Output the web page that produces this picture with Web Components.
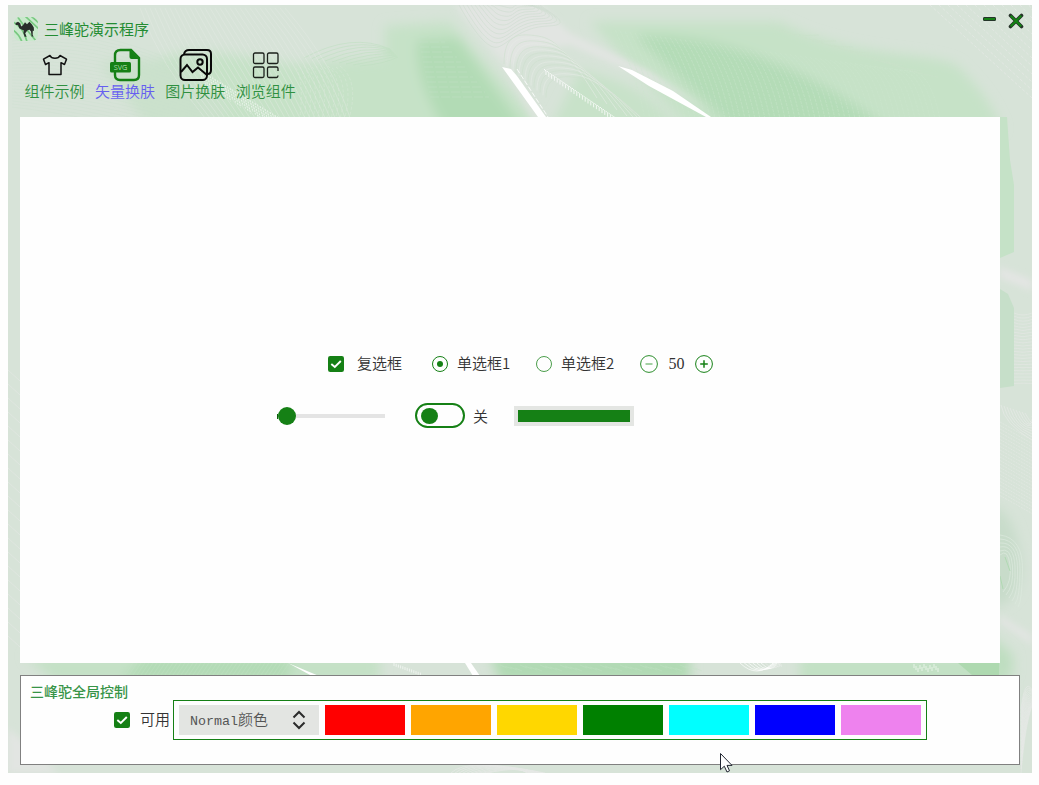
<!DOCTYPE html>
<html lang="zh-CN">
<head>
<meta charset="utf-8">
<title>三峰驼演示程序</title>
<style>
html,body{margin:0;background:#fefefe;overflow:hidden}
body{height:785px;font:15px/18px "Noto Sans CJK SC",sans-serif;--green:#158015}
</style>
</head>
<body>
<demo-window></demo-window>
<script>
function define(name, html, setup) {
  customElements.define(name, class extends HTMLElement {
    connectedCallback() {
      if (this.shadowRoot) return;
      const root = this.attachShadow({ mode: 'open' });
      root.innerHTML = html;
      if (setup) setup.call(this, root);
    }
  });
}

/* Satin backdrop: soft folds, fine contour lines and bright highlights */
define('satin-backdrop', `
<style>:host{display:block;overflow:hidden}svg{display:block}</style>
<svg width="1024" height="768" viewBox="8 5 1024 768">
<defs>
<filter id="b" x="-30%" y="-30%" width="160%" height="160%"><feGaussianBlur stdDeviation="6"/></filter>
<filter id="s" x="-30%" y="-30%" width="160%" height="160%"><feGaussianBlur stdDeviation="3"/></filter>
</defs>
<rect x="8" y="5" width="1024" height="768" fill="#d7e3d8"/>
<g filter="url(#b)">
<path d="M150 62C200 40 260 62 300 64L385 58V26L450 22L545 130H200Z" fill="#c6e2c7"/>
<path d="M100 64C140 50 190 60 230 110L210 130H150Z" fill="#cbe1cc"/>
<path d="M418 40L458 38L525 130H445C428 100 414 70 418 40Z" fill="#b2dbb5"/>
<path d="M590 22H780C850 60 940 50 960 68C980 90 990 100 1002 130H690Z" fill="#c6e2c7"/>
<path d="M635 36C700 30 800 60 890 130H735Z" fill="#b4dcb7"/>
<path d="M580 70C620 80 650 90 680 130H550Z" fill="#c8e2c9"/>
<path d="M25 655H380V682H55Z" fill="#c4e1c6"/>
<path d="M145 655H290V682H120Z" fill="#b3dbb6"/>
<path d="M490 655H690V682H500Z" fill="#b1dab4"/>
<path d="M800 655H1010V690H800Z" fill="#c3e1c5"/>
<path d="M985 505C1008 505 1018 530 1022 570C1018 600 1005 606 985 608Z" fill="#c8dcca"/>
<path d="M985 630L1013 655V675H985Z" fill="#bedec0"/>
</g>
<path d="M998 117H1007L1010 160L1014 185V252L1000 258Z" fill="#c5e2c7"/>
<path d="M1000 289L1008 294L1014 308V386L1000 388Z" fill="#c6dfc9"/>
<path d="M958 663H999V675H972Z" fill="#aed9b0"/>
<g filter="url(#s)">
<path d="M455 5H540L570 33L650 72L710 112L640 75L570 45L525 50L508 70Z" fill="#e2e5e2"/>
<path d="M490 40L550 125H536Z" fill="#dce4dc"/>
<path d="M1000 267L1032 280V291L1000 278Z" fill="#e3e5e3"/>
<path d="M1000 615L1032 635V645L1000 623Z" fill="#e2e5e2"/>
<path d="M8 728L58 773H8Z" fill="#e2e5e2"/>
</g>
<g id="lines" fill="none" stroke-width=".8"></g>
<path d="M502 67L511 69L517 76L546 117H538Z" fill="#fff"/>
<path d="M517 69L548 117" stroke="#fff" stroke-width=".8" stroke-dasharray="5 2"/>
<path d="M618 66L632 70L673 91L711 117H706L649 86Z" fill="#fff"/>
<path d="M288 663L319 676H312Z" fill="#fff"/>
<path d="M465 663H471L480 676H473Z" fill="#fff"/>
</svg>`, function (root) {
  const g = root.getElementById('lines');
  let out = '';
  const add = (d, c, o = 1, dash = '') => out += `<path d="${d}" stroke="${c}" opacity="${o}"${dash ? ` stroke-dasharray="${dash}"` : ''}/>`;
  // nested hanging folds at the top edge
  for (let i = 0; i < 10; i++) add(`M${459 + i * 4} 5C${474 + i * 3} ${32 - i * 3} ${488 + i} ${50 - i * 5} ${498 + i} ${47 - i * 4.4}S${520 - i} ${27 - i * 2.6} ${548 - i * 3} ${26 - i * 2.4}S${548 - i * 2} ${12 - i} ${540 - i * 2} 5`, '#cedccf', .8);
  // arches above the highlight
  for (let i = 0; i < 15; i++) add(`M${504 + i * 3} ${64 + i * 2.4}C${504 + i * 3} ${34 + i * 3} ${518 + i * 3} ${33 + i * 3} ${538 + i * 3} ${36 + i * 3}S${568 + i * 5} ${56 + i * 4} ${592 + i * 5} ${95 + i * 3}`, i % 2 ? '#e6ebe6' : '#ccdfcd', .75);
  for (let i = 0; i < 26; i++) add(`M${544 + i * 2.8} ${69 + i * 1.9}q3 1 2 6`, '#fff', .95);
  for (let i = 0; i < 32; i++) add(`M${200 + i * 2.5} ${70 + i * 1.5}l3 ${12 + (i % 4)}`, '#fff', .8, '2 1');
  for (let i = 0; i < 9; i++) add(`M${304 + i * 7} ${58 + i}Q${352 + i * 4} ${32 + i * 4} ${390 + i} ${49 + i}`, '#bfdec1', .7);
  for (let i = 0; i < 13; i++) add(`M${418 + i} ${37 + i * 5}h${23 + i * 3}`, '#c5dfc6', .6, '9 2');
  for (let i = 0; i < 12; i++) add(`M${296 + i * 4} ${68 - i % 3}Q${304 + i * 5} 80 ${300 + i * 4.5} 117`, '#d8e7d8', .7, '3 2');
  for (let i = 0; i < 60; i++) add(`M${615 + i * 5} ${30 + i * .7}Q${635 + i * 5} 70 ${645 + i * 5} 119`, '#cde5ce', .55, '3 1');
  for (let i = 0; i < 8; i++) add(`M${765 + i * 17} ${25 + i * 5}q26 13 54 ${10 + i}`, '#c9e1ca', .8);
  for (let i = 0; i < 30; i++) add(`M${140 + i * 5} 8Q${160 + i * 6} 65 ${205 + i * 5} 118`, '#e5eae5', .5);
  for (let i = 0; i < 25; i++) add(`M12 ${35 + i * 3}Q90 ${20 + i * 4} 200 ${72 + i * 3}`, '#c9dfcb', .35);
  for (let i = 0; i < 12; i++) add(`M${930 + i * 9} 5L1032 ${98 - i * 8}`, '#e6e9e6', .9, '3 2');
  for (let i = 0; i < 9; i++) add(`M${1001 + i * 3} ${405 + i}Q${1004 + i * 4} ${424 + i} 1032 ${440 - i * 3}`, '#e6e9e6', .9);
  for (let i = 0; i < 22; i++) add(`M1000 ${422 + i * 3.5}L1032 ${440 + i * 3.5}`, '#e6e9e6', .7, '2 1');
  for (let i = 0; i < 23; i++) add(`M1014 ${313 + i * 3.2}Q1023 ${317 + i * 3} 1032 ${313 + i * 3.2}`, '#e4e8e4', .8);
  for (let i = 0; i < 6; i++) add(`M1000 ${555 - i * 4}Q${1008 + i * 3} ${548 - i * 2} ${1010 + i * 2.5} ${565 + i}T${1003 + i * 3} ${592 + i * 3}`, '#dce9dd', .9);
  add('M1005 557L1010 571M1000 576L1003 589', '#a9d8ac', 1);
  for (let i = 0; i < 20; i++) add(`M8 ${370 + i * 14}L20 ${381 + i * 14}`, '#e5e8e5', .8);
  for (let i = 0; i < 17; i++) add(`M1021 ${773 - i * 4}Q1025 ${725 - i * 3} 1032 ${706 - i}`, '#e8eae8', .7);
  for (let i = 0; i < 10; i++) add(`M${740 + i * 4.2} 663Q${757 + i * 3} ${679 - i} ${773 + i * .8} 663`, i < 6 ? '#fff' : '#e8ece8', .85);
  for (let i = 0; i < 10; i++) add(`M${451 + i * 4} 773Q${466 + i * 6} ${757 + i} ${545 - i * 2} 773`, '#e6e9e6', 1);
  for (let i = 0; i < 13; i++) add(`M${394 + i * 2.2} ${663 + i * .8}v3M${914 + i * 2} ${664 + i * 2 % 5}v4`, '#fff', .75);
  for (let i = 0; i < 40; i++) add(`M${125 + i * 4} 675l8 -12M${500 + i * 5} ${665 + i % 4}l7 3`, '#c4e2c6', .45);
  g.innerHTML = out;
});

define('camel-logo', `
<style>:host{display:block;width:24px;height:24px}svg{display:block}</style>
<svg width="24" height="24" viewBox="0 0 24 24"><defs><clipPath id="r"><rect width="24" height="24" rx="6"/></clipPath></defs>
<g clip-path="url(#r)"><rect width="24" height="24" fill="#c9e9cc"/><path d="M-1 5Q10 11 13 25M3-1Q13 14 23 25M11-1L25 12M-1 13Q5 17 8 25M17-1L25 6" stroke="#79c981" stroke-width="1.7" fill="none"/></g>
<path d="M1.5 6L4 4.8L6.2 6.2L7.2 9.5L9.2 8L11 5.2L13 7.3L15.4 4.8L18 7.5L19.8 10.5L20 14L18.8 13.5L18.7 18L19.6 19.6H17.6L17 14.6L15.5 12.8L13.6 13.2L11.2 16.2L12.6 19.8H10.6L9.4 16L9.8 13.4L7.5 12.6L5.2 11.2L4 8L1.8 8Z" fill="#292e2b"/></svg>`);

define('app-icon', `
<style>:host{display:block;width:36px;height:34px}svg{display:block}</style><div></div>`, function (root) {
  const art = {
    shirt: '<path d="M13 7.5L6.5 11.2L8.5 16.5L12 14.7V26.5H24V14.7L27.5 16.5L29.5 11.2L23 7.5C21.5 11.2 14.5 11.2 13 7.5Z" fill="none" stroke="#111" stroke-width="1.5" stroke-linejoin="round"/>',
    svg: '<path d="M8 15V7.5Q8 2 13.5 2H24L32 10V27Q32 32 27 32H13Q8 32 8 27V24" fill="none" stroke="#158015" stroke-width="2.4"/><path d="M22.5 1.5L32 11H24.5Q22.5 11 22.5 9Z" fill="#158015"/><rect x="3" y="14" width="21" height="10.5" rx="1.5" fill="#158015"/><text x="13.5" y="22" text-anchor="middle" textLength="13.5" lengthAdjust="spacingAndGlyphs" font-family="Noto Sans,sans-serif" font-size="8" fill="#d6ecd5">SVG</text>',
    picture: '<g fill="none" stroke="#080808" stroke-width="2"><path d="M6 6Q7 2 11 2H29Q33 2 33 6V22Q33 26 29.5 26"/><rect x="2.5" y="6.5" width="26.5" height="25.5" rx="4.5"/><path d="M3 24L9 17L14.5 24L20 19.5L29 27"/><circle cx="22" cy="14" r="2.7"/></g>',
    grid: '<g fill="none" stroke="#1b211b" stroke-width="1.3"><rect x="5.5" y="5" width="10.5" height="10.5" rx="1.5"/><rect x="19.5" y="5" width="10.5" height="10.5" rx="1.5"/><rect x="5.5" y="19" width="10.5" height="10.5" rx="1.5"/><path d="M30 23V20.5Q30 19 28.5 19H21Q19.5 19 19.5 20.5V28Q19.5 29.5 21 29.5H28.5Q30 29.5 30 27.5"/></g>'
  };
  root.querySelector('div').innerHTML = `<svg width="36" height="34" viewBox="0 0 36 34">${art[this.getAttribute('name')]}</svg>`;
});

define('tool-button', `
<style>:host{display:flex;flex-direction:column;align-items:center;width:60px;color:#2f9040;font-weight:350}
:host([active]){color:#665ff0}span{white-space:nowrap;line-height:18px;margin-left:-1px}</style>
<slot name="icon"></slot><span><slot></slot></span>`);

define('check-mark', `
<style>:host{display:flex;align-items:center;color:#333;font-weight:350;white-space:nowrap}svg{flex:none;margin-right:var(--gap,13px)}span{margin-top:-2px}</style>
<svg width="16" height="16" viewBox="0 0 16 16"><rect width="16" height="16" rx="2.2" fill="#158015"/><path d="M3.3 8L6.8 11L12.8 5" fill="none" stroke="#fff" stroke-width="1.9"/></svg><span><slot></slot></span>`);

define('radio-option', `
<style>:host{display:flex;align-items:center;color:#333;font-weight:350;white-space:nowrap}
i{box-sizing:border-box;flex:none;width:16px;height:16px;border:1px solid #4c9e4c;border-radius:50%;margin-right:9px;display:grid;place-items:center}span{margin-top:-2px}
:host([checked]) i{border-color:var(--green)}:host([checked]) i::after{content:"";width:6px;height:6px;border-radius:50%;background:var(--green)}
</style><i></i><span><slot></slot></span>`);

define('number-stepper', `
<style>:host{display:flex;align-items:center;width:73px;justify-content:space-between;color:#333}span{font:16px/18px "Liberation Serif",serif}svg{display:block}</style>
<svg width="18" height="18" viewBox="0 0 18 18" fill="none" stroke="#2c8e2c"><circle cx="9" cy="9" r="8.4"/><path d="M5.5 9H12.5" stroke="#71b671" stroke-width="1.3"/></svg><span><slot></slot></span>
<svg width="18" height="18" viewBox="0 0 18 18" fill="none" stroke="#158015"><circle cx="9" cy="9" r="8.4"/><path d="M5.2 9H12.8M9 5.2V12.8" stroke-width="1.5"/></svg>`);

define('value-slider', `
<style>:host{display:flex;align-items:center;width:108px;height:18px}b{width:1px;height:5px;background:#0a600a}i{width:18px;height:18px;border-radius:50%;background:var(--green)}u{flex:1;height:4px;background:#e4e4e4}</style><b></b><i></i><u></u>`);

define('toggle-switch', `
<style>:host{display:flex;align-items:center;color:#333;font-weight:350}i{box-sizing:border-box;flex:none;width:50px;height:25px;border:2px solid var(--green);border-radius:13px;display:flex;align-items:center;padding-left:4px;margin:-1px 8px 0 0}i::after{content:"";width:17px;height:16px;border-radius:50%;background:var(--green)}span{margin-top:-1px}</style><i></i><span><slot></slot></span>`);

define('progress-meter', `
<style>:host{display:block;box-sizing:border-box;width:120px;height:20px;padding:4px;background:#e4e6e3}i{display:block;width:112px;height:12px;background:var(--green)}</style><i></i>`);

define('color-select', `
<style>:host{box-sizing:border-box;display:flex;align-items:center;justify-content:space-between;width:140px;height:30px;padding:0 12px 0 11px;background:#e3e5e2;color:#555;font-weight:350}span{margin-top:-2px}b{font:13.33px "Liberation Mono",monospace}svg{display:block}</style>
<span><b>Normal</b><slot></slot></span><svg width="16" height="20" viewBox="0 0 16 20" fill="none" stroke="#2b2b2b" stroke-width="2"><path d="M2.5 7.5L8 2L13.5 7.5M2.5 12.5L8 18L13.5 12.5"/></svg>`);

define('color-strip', `
<style>:host{box-sizing:border-box;display:flex;gap:6px;width:754px;height:40px;border:1px solid var(--green);padding:4px 5px}i{width:80px;height:30px}</style>
<color-select>颜色</color-select>`, function (root) {
  for (const c of ['#f00', '#ffa500', '#ffd700', '#008000', '#0ff', '#00f', '#ee82ee']) {
    const i = document.createElement('i'); i.style.background = c; root.append(i);
  }
});

define('title-bar', `
<style>:host{display:flex;height:40px;align-items:flex-start;justify-content:space-between}
.t{display:flex;gap:6px;padding:12px 0 0 6px;color:#238c32;line-height:24px}.w{padding:7px 7px 0 0}svg{display:block}</style>
<div class="t"><camel-logo></camel-logo><span><slot></slot></span></div>
<div class="w"><svg width="44" height="18" viewBox="0 0 44 18"><rect x="2.5" y="5.5" width="12" height="3" rx=".5" fill="#158015" stroke="#25352a"/><path d="M29.5 3.5L40.5 14.5M40.5 3.5L29.5 14.5" stroke="#263329" stroke-width="3.6" stroke-linecap="round"/><path d="M29.7 3.7L40.3 14.3M40.3 3.7L29.7 14.3" stroke="#138313" stroke-width="2"/></svg></div>`);

define('showcase-panel', `
<style>:host{box-sizing:border-box;display:block;width:980px;height:546px;background:#fefefe;padding-top:237px}
.r{display:flex;align-items:center;height:20px;padding-left:308px}.q{display:flex;align-items:center;height:26px;margin-top:29px;padding-left:257px}
radio-option{width:77px}.a{margin-left:30px}.b{margin-left:27px}number-stepper{margin-left:27px}toggle-switch{margin-left:30px;width:73px}progress-meter{margin-left:26px}check-mark{width:74px}</style>
<div class="r"><check-mark>复选框</check-mark><radio-option class="a" checked>单选框1</radio-option><radio-option class="b">单选框2</radio-option><number-stepper>50</number-stepper></div>
<div class="q"><value-slider></value-slider><toggle-switch>关</toggle-switch><progress-meter></progress-meter></div>`);

define('global-controls', `
<style>:host{box-sizing:border-box;display:block;width:1000px;height:90px;border:1px solid #808080;background:#fefefe;padding-top:7px}
h2{margin:0 0 1px 9px;font-size:14px;line-height:16px;font-weight:500;color:#379447}.r{display:flex;align-items:center;padding-left:93px}check-mark{--gap:10px;width:59px}</style>
<h2>三峰驼全局控制</h2><div class="r"><check-mark>可用</check-mark><color-strip></color-strip></div>`);

define('mouse-pointer', `
<style>:host{position:absolute;left:712px;top:748px}svg{display:block}</style>
<svg width="13" height="20" viewBox="0 0 13 20"><path d="M.5.5V16.7L4.3 13.2L7 19L9.5 17.8L7 12.4H12Z" fill="#fff" stroke="#222632"/></svg>`);

define('demo-window', `
<style>:host{position:relative;display:grid;width:1024px;height:768px;margin:5px 0 0 8px}satin-backdrop,.content{grid-area:1/1;min-width:0}
.content{z-index:1;display:flex;flex-direction:column}nav{display:flex;gap:10.4px;padding:3px 0 0 17px;height:69px}showcase-panel,global-controls{margin-left:12px}global-controls{margin-top:12px}mouse-pointer{z-index:2}</style>
<satin-backdrop></satin-backdrop>
<div class="content"><title-bar>三峰驼演示程序</title-bar>
<nav><tool-button><app-icon slot="icon" name="shirt"></app-icon>组件示例</tool-button><tool-button active><app-icon slot="icon" name="svg"></app-icon>矢量换肤</tool-button><tool-button><app-icon slot="icon" name="picture"></app-icon>图片换肤</tool-button><tool-button><app-icon slot="icon" name="grid"></app-icon>浏览组件</tool-button></nav>
<showcase-panel></showcase-panel><global-controls></global-controls></div><mouse-pointer></mouse-pointer>`);
</script>
</body>
</html>
